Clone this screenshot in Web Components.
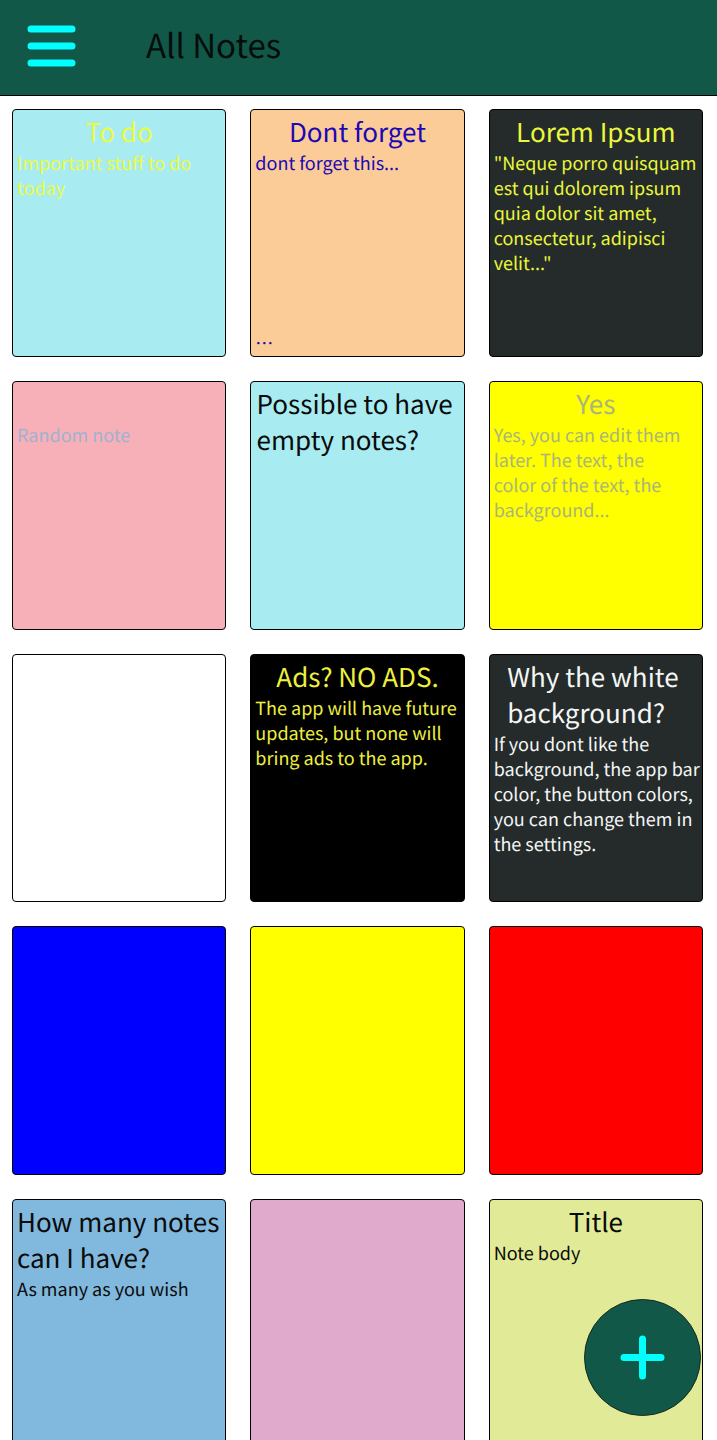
<!DOCTYPE html>
<html lang="en">
<head>
<meta charset="utf-8">
<meta name="viewport" content="width=device-width, initial-scale=1">
<title>All Notes</title>
<style>
  html, body { margin: 0; height: 100%; }
  body {
    background: #fff; color: #000; font-family: "Noto Sans CJK SC", "Noto Sans", sans-serif;
    text-rendering: geometricPrecision;
  }
</style>
</head>
<body>
<notes-app>
  <app-bar slot="bar">All Notes</app-bar>
  <note-card style="--paper:#a8ecf2;--ink:#e9fb45"><span slot="title">To do</span>Important stuff to do today</note-card>
  <note-card style="--paper:#fbcc97;--ink:#1c08b4"><span slot="title">Dont forget</span>dont forget this...<span slot="more">…</span></note-card>
  <note-card style="--paper:#242b2a;--ink:#eaf73c"><span slot="title">Lorem Ipsum</span>"Neque porro quisquam est qui dolorem ipsum quia dolor sit amet, consectetur, adipisci velit..."</note-card>
  <note-card style="--paper:#f7b0b7;--ink:#a0b2cf">Random note</note-card>
  <note-card style="--paper:#a8ecf2"><span slot="title">Possible to have 
empty notes?</span></note-card>
  <note-card style="--paper:#ffff00;--ink:#a9b57c"><span slot="title">Yes</span>Yes, you can edit them later. The text, the<br>color of the text, the background...</note-card>
  <note-card style="--paper:#fff"></note-card>
  <note-card style="--paper:#000;--ink:#eef03e"><span slot="title">Ads? NO ADS.</span>The app will have future updates, but none will bring ads to the app.</note-card>
  <note-card style="--paper:#242b2a;--ink:#f4f6f6"><span slot="title">Why the white 
background?</span>If you dont like the background, the app bar color, the button colors, you can change them in the settings.</note-card>
  <note-card style="--paper:#0000ff"></note-card>
  <note-card style="--paper:#ffff00"></note-card>
  <note-card style="--paper:#ff0000"></note-card>
  <note-card style="--paper:#80b9dd"><span slot="title">How many notes 
can I have?</span>As many as you wish</note-card>
  <note-card style="--paper:#dfaacc"></note-card>
  <note-card style="--paper:#e1eb97"><span slot="title">Title</span>Note body</note-card>
  <add-button slot="action"></add-button>
</notes-app>
<script>
  function define(name, html) {
    const template = document.createElement('template');
    template.innerHTML = html;
    customElements.define(name, class extends HTMLElement {
      constructor() {
        super();
        this.attachShadow({ mode: 'open' }).append(template.content.cloneNode(true));
      }
    });
  }

  define('notes-app', `
    <style>
      :host { display: flex; flex-direction: column; height: 100vh; overflow: hidden; }
      main {
        flex: 1; min-height: 0; overflow-y: auto; scrollbar-width: none;
        display: grid; grid-template-columns: repeat(3, minmax(0, 1fr));
        grid-auto-rows: max-content; gap: 24px; padding: 13px 14px 12px 12px;
      }
    </style>
    <slot name="bar"></slot>
    <main><slot></slot></main>
    <slot name="action"></slot>`);

  define('app-bar', `
    <style>
      :host { display: block; }
      header {
        box-sizing: border-box; height: 96px; padding: 0 24px 4px; display: flex; align-items: center;
        gap: 68px; background: #125849; border-bottom: 1px solid #000;
      }
      button { width: 54px; height: 48px; padding: 0; border: 0; background: none; cursor: pointer; }
      svg { display: block; }
      h1 { margin: 0; padding-bottom: 3px; font-size: 33px; line-height: 48px; font-weight: 400; color: #050d0b; }
    </style>
    <header>
      <button type="button" aria-label="Open menu">
        <svg width="54" height="48" viewBox="0 0 54 48" fill="none" stroke="#00ffff" stroke-width="7" stroke-linecap="round">
          <path d="M7 7H48M7 24H48M7 41H48"/>
        </svg>
      </button>
      <h1><slot></slot></h1>
    </header>`);

  define('note-card', `
    <style>
      :host { display: flex; min-width: 0; aspect-ratio: 69 / 80; }
      article {
        box-sizing: border-box; flex: 1; min-width: 0; padding: 4px 0 0 4px; display: flex; flex-direction: column;
        background: var(--paper); color: var(--ink, #0a0a0a); border: 1px solid #000; border-radius: 4px;
      }
      h2 {
        box-sizing: border-box; margin: 0 0 1px; padding-right: 4px; align-self: center; max-width: 100%;
        min-height: 36px; font-size: 26px; line-height: 36px; font-weight: 400; white-space: pre;
      }
      p { margin: 0; font-size: 18px; line-height: 25px; }
      .more { margin-top: auto; }
    </style>
    <article>
      <h2><slot name="title"></slot></h2>
      <p><slot></slot></p>
      <p class="more"><slot name="more"></slot></p>
    </article>`);

  define('add-button', `
    <style>
      :host { position: fixed; right: 16px; bottom: 24px; display: block; }
      button {
        box-sizing: border-box; width: 117px; height: 117px; padding: 0; display: grid; place-items: center;
        border: 1px solid #16291f; border-radius: 50%; background: #125849; cursor: pointer;
      }
    </style>
    <button type="button" aria-label="Add note">
      <svg width="45" height="45" viewBox="0 0 45 45" fill="none" stroke="#00ffff" stroke-width="7" stroke-linecap="round">
        <path d="M4 22.5H41M22.5 4V41"/>
      </svg>
    </button>`);
</script>
</body>
</html>
